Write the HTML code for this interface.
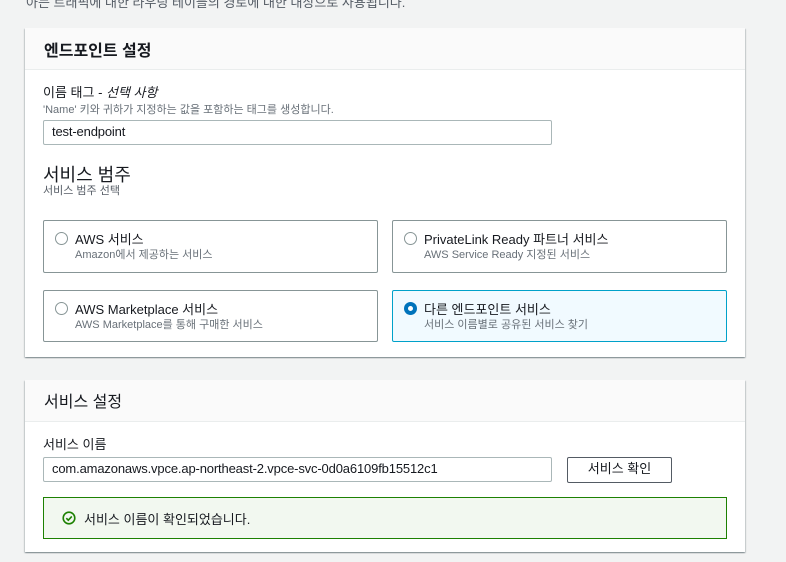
<!DOCTYPE html>
<html><head><meta charset="utf-8"><style>
*{box-sizing:border-box;margin:0;padding:0}
body{width:786px;height:562px;overflow:hidden;background:#f2f3f3;font-family:"Liberation Sans","Noto Sans CJK KR",sans-serif;color:#16191f;position:relative}
.a{position:absolute}
.panel{position:absolute;left:25px;width:720px;background:#fff;box-shadow:0 1px 1px 0 rgba(0,28,36,.3),1px 1px 1px 0 rgba(0,28,36,.15),-1px 1px 1px 0 rgba(0,28,36,.15)}
.hd{height:42px;background:#fafafa;border-bottom:1px solid #eaeded;font-size:16px;font-weight:bold;padding:9px 19px}
.inp{position:absolute;border:1px solid #aab7b8;border-radius:2px;font-size:13px;padding:3px 8px;height:25px;background:#fff;letter-spacing:-0.15px}
.card{position:absolute;border:1px solid #879596;border-radius:2px;width:335px;height:53px;background:#fff}
.card .r{position:absolute;left:11px;top:11px;width:13px;height:13px;border:1px solid #879596;border-radius:50%}
.card .t{position:absolute;left:31px;top:8px;font-size:13px}
.card .s{position:absolute;left:31px;top:25px;font-size:11px;color:#687078}
</style></head><body>
<div class="a" style="left:26px;top:-8px;font-size:13px;color:#545b64">아는 트래픽에 대한 라우팅 테이블의 경로에 대한 대상으로 사용됩니다.</div>
<div class="panel" style="top:28px;height:329px">
<div class="hd">엔드포인트 설정</div>
</div>
<div class="a" style="left:43px;top:82px;font-size:13px">이름 태그 - <i>선택 사항</i></div>
<div class="a" style="left:43px;top:101px;font-size:11px;color:#687078">'Name' 키와 귀하가 지정하는 값을 포함하는 태그를 생성합니다.</div>
<div class="inp" style="left:43px;top:120px;width:509px">test-endpoint</div>
<div class="a" style="left:43px;top:161px;font-size:18px">서비스 범주</div>
<div class="a" style="left:43px;top:182px;font-size:11px;color:#545b64">서비스 범주 선택</div>
<div class="card" style="left:43px;top:220px"><div class="r"></div><div class="t">AWS 서비스</div><div class="s">Amazon에서 제공하는 서비스</div></div>
<div class="card" style="left:392px;top:220px"><div class="r"></div><div class="t">PrivateLink Ready 파트너 서비스</div><div class="s">AWS Service Ready 지정된 서비스</div></div>
<div class="card" style="left:43px;top:290px;height:52px"><div class="r"></div><div class="t">AWS Marketplace 서비스</div><div class="s">AWS Marketplace를 통해 구매한 서비스</div></div>
<div class="card" style="left:392px;top:290px;height:52px;border-color:#00a1c9;background:#f1faff"><div class="r" style="border:4px solid #0073bb;background:#fff"></div><div class="t">다른 엔드포인트 서비스</div><div class="s">서비스 이름별로 공유된 서비스 찾기</div></div>
<div class="panel" style="top:380px;height:172px">
<div class="hd" style="font-weight:normal;padding-top:8px">서비스 설정</div>
</div>
<div class="a" style="left:43px;top:434px;font-size:13px">서비스 이름</div>
<div class="inp" style="left:43px;top:457px;width:509px">com.amazonaws.vpce.ap-northeast-2.vpce-svc-0d0a6109fb15512c1</div>
<div class="a" style="left:567px;top:457px;width:105px;height:26px;border:1px solid #545b64;border-radius:2px;font-size:13px;text-align:center;line-height:22px;background:#fff">서비스 확인</div>
<div class="a" style="left:43px;top:497px;width:684px;height:42px;border:1px solid #1d8102;background:#f2f8f0"></div>
<svg class="a" style="left:62px;top:511px" width="14" height="14" viewBox="0 0 14 14"><circle cx="7" cy="7" r="5.8" fill="none" stroke="#1d8102" stroke-width="1.6"/><path d="M4.3 7.2l2 2 3.5-3.8" fill="none" stroke="#1d8102" stroke-width="1.6"/></svg>
<div class="a" style="left:84px;top:509px;font-size:13px">서비스 이름이 확인되었습니다.</div>
</body></html>
